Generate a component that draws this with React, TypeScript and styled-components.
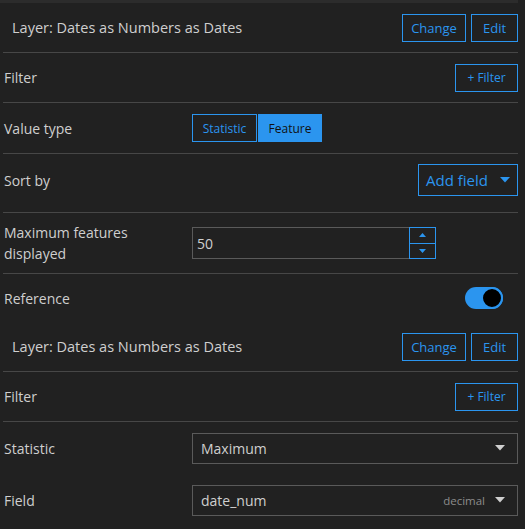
import React from "react";
import styled, { createGlobalStyle, css } from "styled-components";

const BLUE = "#2b95ef";
const TEXT = "#cfcfcf";
const LINE = "#474747";

const Global = createGlobalStyle`
  html, body { margin: 0; padding: 0; background: #212121; }
  body { font-family: "Open Sans", Lato, sans-serif; color: ${TEXT}; }
`;

const Page = styled.div`
  width: 525px;
  height: 529px;
  background: #212121;
  overflow: hidden;
`;

const TopStrip = styled.div`
  width: 518px;
  height: 3px;
  background: #2c2c2c;
`;

const Panel = styled.div`
  width: 515px;
  margin-left: 3px;
  display: flex;
  flex-direction: column;
`;

const Row = styled.div<{ $h: number; $line?: boolean; $pb?: number }>`
  display: flex;
  align-items: center;
  height: ${(p) => p.$h}px;
  padding-bottom: ${(p) => p.$pb ?? 0}px;
  box-sizing: border-box;
  ${(p) =>
    p.$line &&
    css`
      border-bottom: 1px solid ${LINE};
    `}
`;

const Label = styled.div`
  width: 188px;
  flex: none;
  padding-left: 1px;
  font-size: 14px;
  line-height: 21px;
  color: ${TEXT};
`;

const Title = styled.div`
  flex: 1;
  padding-left: 9px;
  font-size: 14.5px;
  line-height: 21px;
  color: ${TEXT};
`;

const Spacer = styled.div`
  flex: 1;
`;

const Actions = styled.div`
  display: flex;
  gap: 5px;
`;

const OutlineButton = styled.button<{ $w: number; $h?: number; $size?: number }>`
  width: ${(p) => p.$w}px;
  height: ${(p) => p.$h ?? 28}px;
  box-sizing: border-box;
  background: transparent;
  border: 1px solid ${BLUE};
  color: ${BLUE};
  font-family: inherit;
  font-size: ${(p) => p.$size ?? 13}px;
  padding: 0;
  display: flex;
  align-items: center;
  justify-content: center;
  gap: 12px;
`;

const Segments = styled.div`
  display: flex;
  gap: 1px;
`;

const Segment = styled.button<{ $on?: boolean; $w: number }>`
  width: ${(p) => p.$w}px;
  height: 28px;
  box-sizing: border-box;
  border: 1px solid ${BLUE};
  background: ${(p) => (p.$on ? BLUE : "transparent")};
  color: ${(p) => (p.$on ? "#111" : BLUE)};
  font-family: inherit;
  font-size: 12px;
  padding: 0;
`;

const Caret = ({ color }: { color: string }) => (
  <svg width="10" height="6" viewBox="0 0 10 6">
    <path d="M0 0h10L5 5.5z" fill={color} />
  </svg>
);

const NumberBox = styled.div`
  width: 244px;
  height: 32px;
  box-sizing: border-box;
  border: 1px solid #5a5a5a;
  border-right: none;
  display: flex;
  align-items: center;
`;

const NumberValue = styled.div`
  flex: 1;
  padding-left: 4px;
  font-size: 14px;
  color: ${TEXT};
`;

const Spinner = styled.div`
  width: 27px;
  height: 32px;
  margin-top: -1px;
  margin-bottom: -1px;
  display: flex;
  flex-direction: column;
`;

const SpinHalf = styled.div<{ $top?: boolean }>`
  flex: 1;
  box-sizing: border-box;
  border: 1px solid ${BLUE};
  ${(p) => !p.$top && "border-top: none;"}
  display: flex;
  align-items: center;
  justify-content: center;
`;

const Arrow = ({ up }: { up?: boolean }) => (
  <svg width="7" height="4" viewBox="0 0 7 4">
    <path d={up ? "M0 4h7L3.5 0z" : "M0 0h7L3.5 4z"} fill={BLUE} />
  </svg>
);

const Toggle = styled.div`
  width: 38px;
  height: 22px;
  margin-right: 15px;
  border-radius: 11px;
  background: ${BLUE};
  position: relative;
`;

const Knob = styled.div`
  position: absolute;
  right: 0;
  top: 0;
  width: 22px;
  height: 22px;
  box-sizing: border-box;
  border-radius: 50%;
  background: #000;
  border: 2px solid ${BLUE};
`;

const Select = styled.div`
  width: 327px;
  height: 31px;
  box-sizing: border-box;
  border: 1px solid #5a5a5a;
  display: flex;
  align-items: center;
  padding: 0 12px 0 8px;
  gap: 10px;
`;

const SelectText = styled.div`
  flex: 1;
  font-size: 14px;
  color: ${TEXT};
`;

const Hint = styled.div`
  font-size: 11.5px;
  color: #8c8c8c;
`;

const LayerRow = () => (
  <Row $h={50} $line>
    <Title>Layer: Dates as Numbers as Dates</Title>
    <Actions>
      <OutlineButton $w={64}>Change</OutlineButton>
      <OutlineButton $w={47}>Edit</OutlineButton>
    </Actions>
  </Row>
);

const FilterRow = () => (
  <Row $h={50} $line>
    <Label>Filter</Label>
    <Spacer />
    <OutlineButton $w={63} $size={12}>
      + Filter
    </OutlineButton>
  </Row>
);

export default function App() {
  return (
    <Page>
      <Global />
      <TopStrip />
      <Panel>
        <LayerRow />
        <FilterRow />
        <Row $h={51} $line>
          <Label>Value type</Label>
          <Segments>
            <Segment $w={65}>Statistic</Segment>
            <Segment $w={64} $on>
              Feature
            </Segment>
          </Segments>
        </Row>
        <Row $h={59} $line $pb={6}>
          <Label>Sort by</Label>
          <Spacer />
          <OutlineButton $w={100} $h={32} $size={15}>
            Add field <Caret color={BLUE} />
          </OutlineButton>
        </Row>
        <Row $h={61} $line>
          <Label>
            Maximum features
            <br />
            displayed
          </Label>
          <NumberBox>
            <NumberValue>50</NumberValue>
            <Spinner>
              <SpinHalf $top>
                <Arrow up />
              </SpinHalf>
              <SpinHalf>
                <Arrow />
              </SpinHalf>
            </Spinner>
          </NumberBox>
        </Row>
        <Row $h={48}>
          <Label>Reference</Label>
          <Spacer />
          <Toggle>
            <Knob />
          </Toggle>
        </Row>
        <LayerRow />
        <FilterRow />
        <Row $h={52}>
          <Label>Statistic</Label>
          <Select>
            <SelectText>Maximum</SelectText>
            <Caret color="#cfcfcf" />
          </Select>
        </Row>
        <Row $h={52}>
          <Label>Field</Label>
          <Select>
            <SelectText>date_num</SelectText>
            <Hint>decimal</Hint>
            <Caret color="#cfcfcf" />
          </Select>
        </Row>
      </Panel>
    </Page>
  );
}
